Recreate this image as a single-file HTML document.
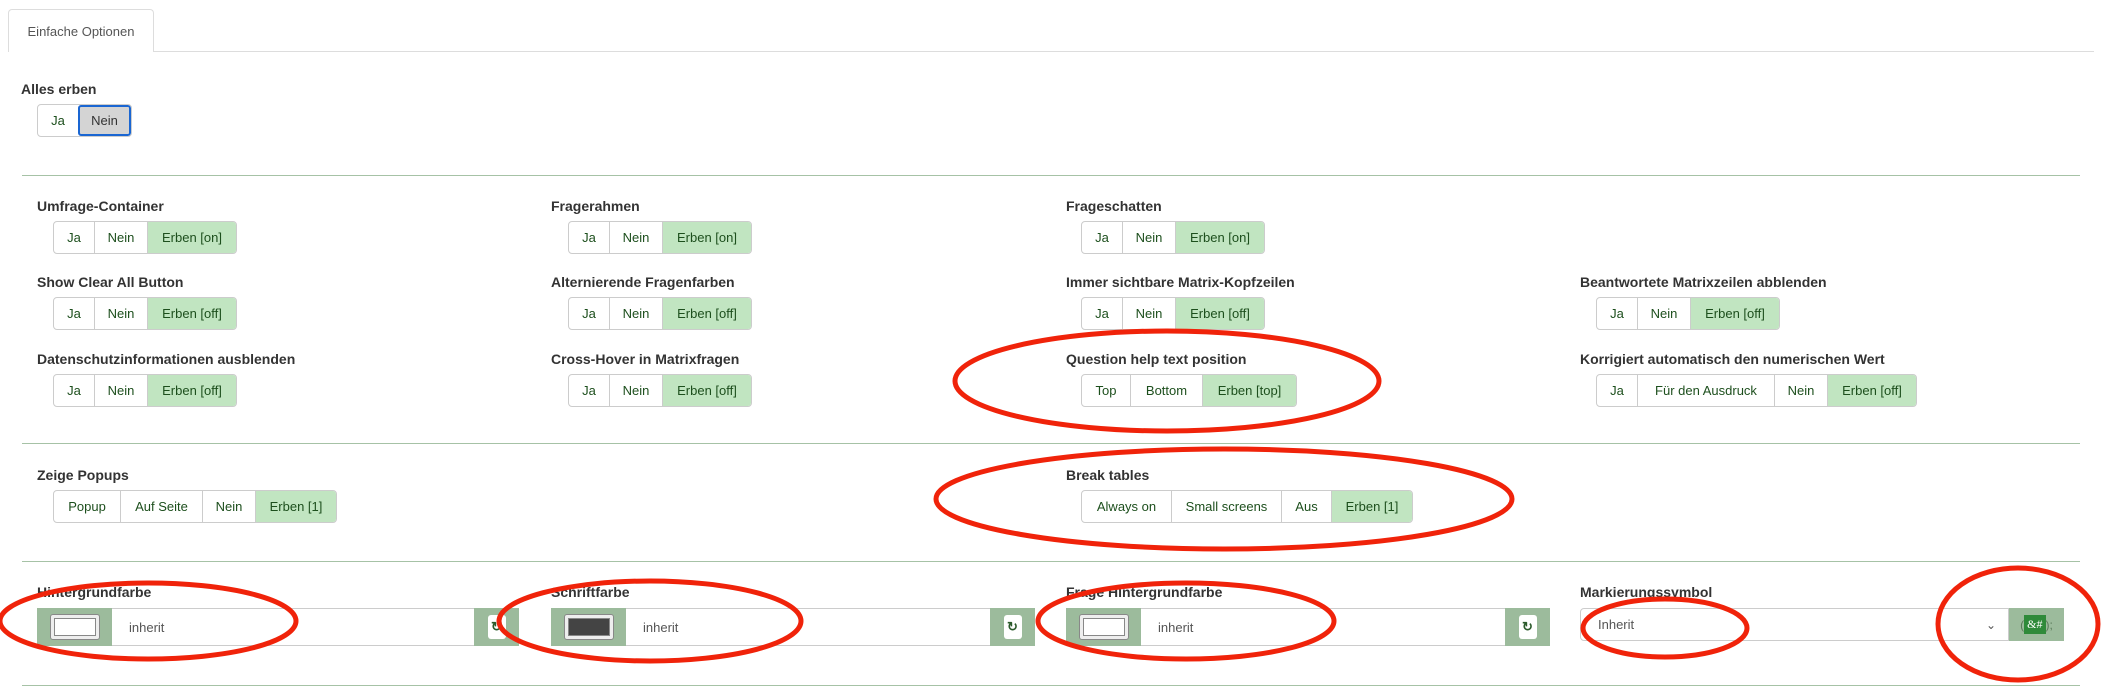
<!DOCTYPE html>
<html><head><meta charset="utf-8"><style>
*{box-sizing:border-box;margin:0;padding:0}
body{width:2114px;height:698px;background:#fff;position:relative;overflow:hidden;font-family:"Liberation Sans",sans-serif;}
.a{position:absolute}
.lbl{position:absolute;font-weight:bold;font-size:14px;color:#333;line-height:16px;white-space:nowrap}
.bg{position:absolute;display:flex;height:33px;border:1px solid #ccc;border-radius:4px;overflow:hidden}
.bg span{display:flex;align-items:center;justify-content:center;font-size:13px;color:#1d4f1d;border-left:1px solid #ccc;height:100%;white-space:nowrap}
.bg span:first-child{border-left:none}
.bg span.on{background:#c1e5c1}
.hr{position:absolute;left:22px;width:2058px;height:1px;background:#a6c2a6}
.cg{position:absolute;height:38px;display:flex}
.ad{background:#9cbb9c;height:38px;display:flex;align-items:center;justify-content:center}
.sw{width:50px;height:26px;border:1px solid #888;border-radius:3px;background:#eee;padding:3px}
.sw div{width:100%;height:100%;border:1px solid #888}
.in{flex:1;border-top:1px solid #ccc;border-bottom:1px solid #ccc;font-size:13px;color:#555;display:flex;align-items:center;padding-left:17px;height:38px}
.rf{width:45px}
.rf div{width:18px;height:24px;background:#fff;border-radius:3px;font-size:13px;color:#2b5a2b;display:flex;align-items:center;justify-content:center;font-weight:bold}
</style></head><body>
<div class="a" style="left:8px;top:9px;width:146px;height:43px;border:1px solid #ddd;border-bottom:none;border-radius:4px 4px 0 0;background:#fff;z-index:2;font-size:13px;color:#555;display:flex;align-items:center;justify-content:center">Einfache Optionen</div>
<div class="a" style="left:8px;top:51px;width:2086px;height:1px;background:#ddd"></div>

<div class="lbl" style="left:21px;top:81px">Alles erben</div>
<div class="bg" style="left:37px;top:104px;height:33px"><span style="width:40px">Ja</span><span style="width:53px;background:#d4d4d4;border:2px solid #1a66d2;border-radius:3px;color:#333">Nein</span></div>

<div class="hr" style="top:175px"></div>

<div class="lbl" style="left:37px;top:198px">Umfrage-Container</div>
<div class="bg" style="left:53px;top:221px"><span style="width:40px">Ja</span><span style="width:53px">Nein</span><span class="on" style="width:89px">Erben [on]</span></div>
<div class="lbl" style="left:551px;top:198px">Fragerahmen</div>
<div class="bg" style="left:568px;top:221px"><span style="width:40px">Ja</span><span style="width:53px">Nein</span><span class="on" style="width:89px">Erben [on]</span></div>
<div class="lbl" style="left:1066px;top:198px">Frageschatten</div>
<div class="bg" style="left:1081px;top:221px"><span style="width:40px">Ja</span><span style="width:53px">Nein</span><span class="on" style="width:89px">Erben [on]</span></div>

<div class="lbl" style="left:37px;top:274px">Show Clear All Button</div>
<div class="bg" style="left:53px;top:297px"><span style="width:40px">Ja</span><span style="width:53px">Nein</span><span class="on" style="width:89px">Erben [off]</span></div>
<div class="lbl" style="left:551px;top:274px">Alternierende Fragenfarben</div>
<div class="bg" style="left:568px;top:297px"><span style="width:40px">Ja</span><span style="width:53px">Nein</span><span class="on" style="width:89px">Erben [off]</span></div>
<div class="lbl" style="left:1066px;top:274px">Immer sichtbare Matrix-Kopfzeilen</div>
<div class="bg" style="left:1081px;top:297px"><span style="width:40px">Ja</span><span style="width:53px">Nein</span><span class="on" style="width:89px">Erben [off]</span></div>
<div class="lbl" style="left:1580px;top:274px">Beantwortete Matrixzeilen abblenden</div>
<div class="bg" style="left:1596px;top:297px"><span style="width:40px">Ja</span><span style="width:53px">Nein</span><span class="on" style="width:89px">Erben [off]</span></div>

<div class="lbl" style="left:37px;top:351px">Datenschutzinformationen ausblenden</div>
<div class="bg" style="left:53px;top:374px"><span style="width:40px">Ja</span><span style="width:53px">Nein</span><span class="on" style="width:89px">Erben [off]</span></div>
<div class="lbl" style="left:551px;top:351px">Cross-Hover in Matrixfragen</div>
<div class="bg" style="left:568px;top:374px"><span style="width:40px">Ja</span><span style="width:53px">Nein</span><span class="on" style="width:89px">Erben [off]</span></div>
<div class="lbl" style="left:1066px;top:351px">Question help text position</div>
<div class="bg" style="left:1081px;top:374px"><span style="width:48px">Top</span><span style="width:72px">Bottom</span><span class="on" style="width:94px">Erben [top]</span></div>
<div class="lbl" style="left:1580px;top:351px">Korrigiert automatisch den numerischen Wert</div>
<div class="bg" style="left:1596px;top:374px"><span style="width:40px">Ja</span><span style="width:137px">Für den Ausdruck</span><span style="width:53px">Nein</span><span class="on" style="width:89px">Erben [off]</span></div>

<div class="hr" style="top:443px"></div>

<div class="lbl" style="left:37px;top:467px">Zeige Popups</div>
<div class="bg" style="left:53px;top:490px"><span style="width:66px">Popup</span><span style="width:82px">Auf Seite</span><span style="width:53px">Nein</span><span class="on" style="width:81px">Erben [1]</span></div>
<div class="lbl" style="left:1066px;top:467px">Break tables</div>
<div class="bg" style="left:1081px;top:490px"><span style="width:89px">Always on</span><span style="width:110px">Small screens</span><span style="width:50px">Aus</span><span class="on" style="width:81px">Erben [1]</span></div>

<div class="hr" style="top:561px"></div>

<div class="lbl" style="left:37px;top:584px">Hintergrundfarbe</div>
<div class="cg" style="left:37px;top:608px;width:482px"><div class="ad" style="width:75px"><div class="sw"><div style="background:#fff"></div></div></div><div class="in">inherit</div><div class="ad rf"><div>↻</div></div></div>
<div class="lbl" style="left:551px;top:584px">Schriftfarbe</div>
<div class="cg" style="left:551px;top:608px;width:484px"><div class="ad" style="width:75px"><div class="sw"><div style="background:#444"></div></div></div><div class="in">inherit</div><div class="ad rf"><div>↻</div></div></div>
<div class="lbl" style="left:1066px;top:584px">Frage Hintergrundfarbe</div>
<div class="cg" style="left:1066px;top:608px;width:484px"><div class="ad" style="width:75px"><div class="sw"><div style="background:#fff"></div></div></div><div class="in">inherit</div><div class="ad rf"><div>↻</div></div></div>
<div class="lbl" style="left:1580px;top:584px">Markierungssymbol</div>
<div class="cg" style="left:1580px;top:608px;width:484px;height:33px"><div class="in" style="border:1px solid #ccc;border-radius:4px 0 0 4px;height:33px;position:relative">Inherit<span style="position:absolute;right:12px;font-size:12px;color:#555">⌄</span></div><div class="ad" style="width:55px;height:33px;font-size:12px;color:#fff"><span style="color:#5a7a5a">(</span><span style="background:#2f8a3a;padding:2px 3px;font-family:'Liberation Serif',serif">&amp;#</span><span style="color:#5a7a5a">);</span></div></div>

<div class="hr" style="top:685px"></div>

<svg class="a" style="left:0;top:0" width="2114" height="698">
<g fill="none" stroke="#f0230a" stroke-width="5">
<ellipse cx="1167" cy="381" rx="212" ry="50"/>
<ellipse cx="1224" cy="499" rx="288" ry="50"/>
<ellipse cx="148" cy="621" rx="148" ry="38"/>
<ellipse cx="650" cy="621" rx="151" ry="40"/>
<ellipse cx="1186" cy="621" rx="148" ry="38"/>
<ellipse cx="1665" cy="628" rx="82" ry="29"/>
<ellipse cx="2018" cy="624" rx="80" ry="56"/>
</g></svg>
</body></html>
